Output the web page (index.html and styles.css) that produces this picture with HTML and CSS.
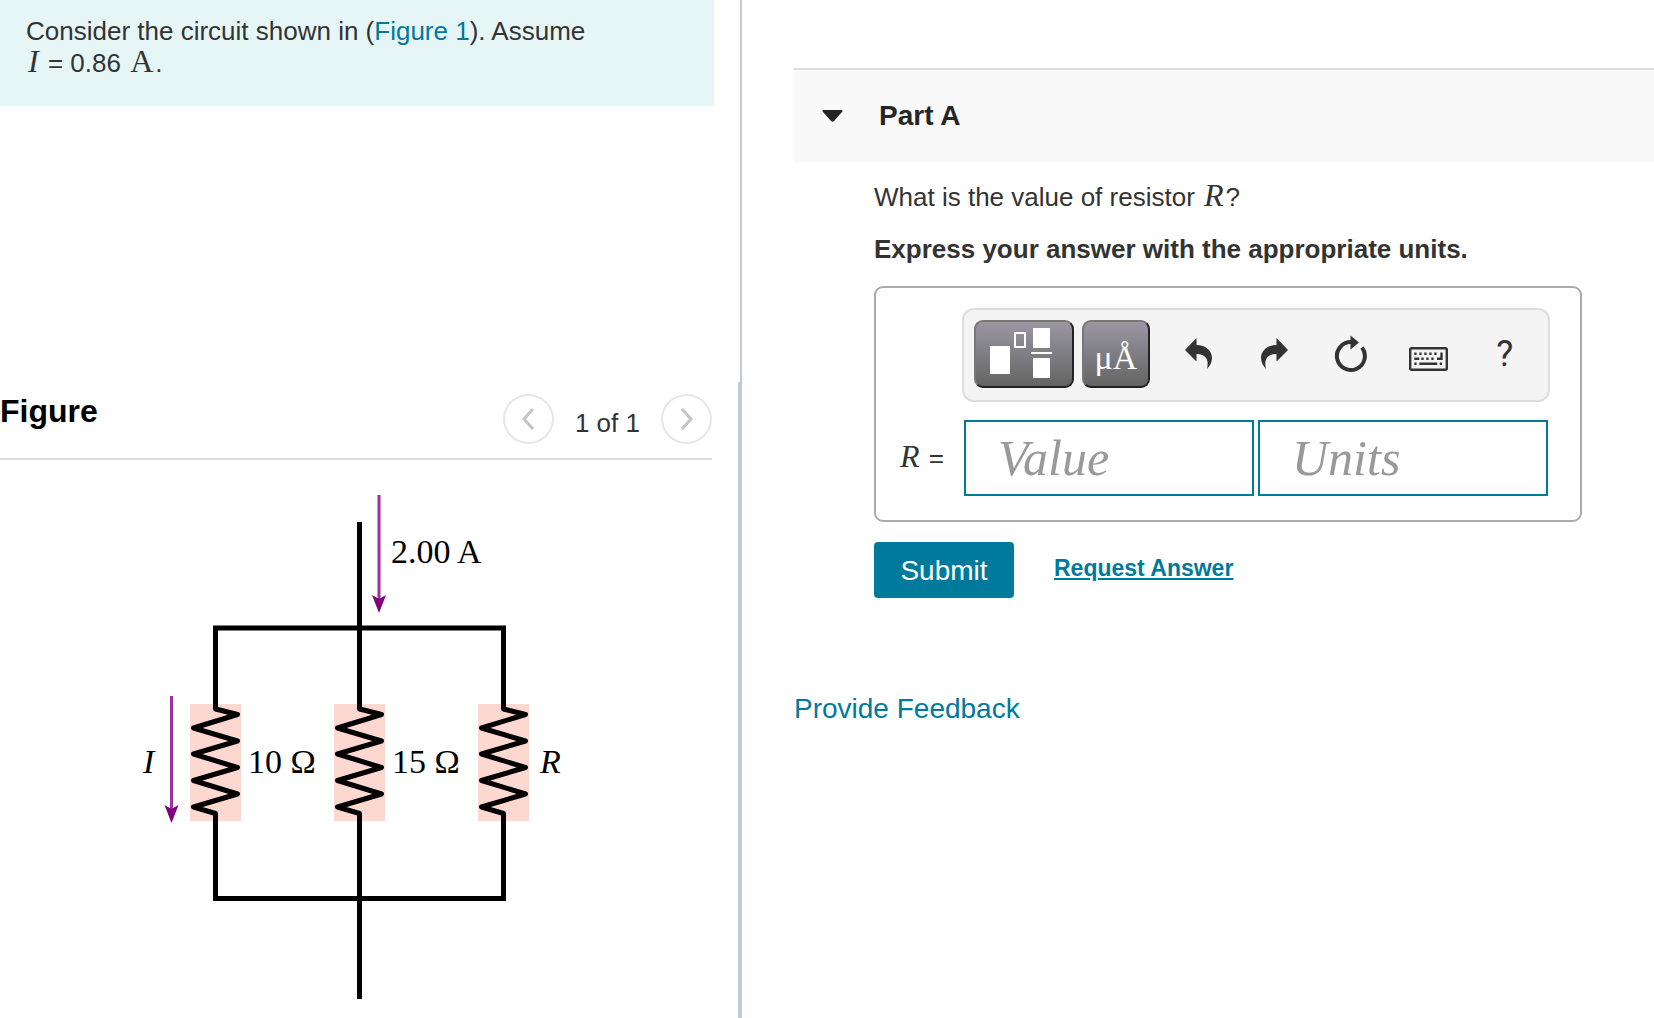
FILE: index.html
```html
<!DOCTYPE html>
<html lang="en">
<head>
    <meta charset="UTF-8">
    <meta name="viewport" content="width=device-width, initial-scale=1.0">
    <title>Part A</title>
    <link rel="stylesheet" href="styles.css">
</head>
<body>
    <div class="page">
        <div class="left">
            <section class="intro">
                <p class="problem">Consider the circuit shown in (<a href="#figure">Figure 1</a>). Assume<br>
                <i class="math">I</i> = 0.86 <span class="math">A</span>.</p>
            </section>

            <section class="figure" id="figure">
                <div class="figure-header">
                    <h2>Figure</h2>
                    <div class="pager">
                        <button class="round" aria-label="Previous figure">
                            <svg width="14" height="24" viewBox="0 0 14 24"><path d="M12 2L3 12L12 22"/></svg>
                        </button>
                        <span class="count">1 of 1</span>
                        <button class="round" aria-label="Next figure">
                            <svg width="14" height="24" viewBox="0 0 14 24"><path d="M2 2L11 12L2 22"/></svg>
                        </button>
                    </div>
                </div>

                <svg class="circuit" width="450" height="530" viewBox="0 0 450 530">
                    <defs>
                        <g id="resistor">
                            <rect x="-25.500" y="224" width="51" height="117" fill="#fcd8d1"/>
                            <path class="wire" d="M0 147V229L22 234.500L-22 248L22 261L-22 274L22 287.500L-22 300.500L22 314L-22 327L0 333.500V419"/>
                        </g>
                        <path id="head" fill="#800080" d="M-7 -18L0 -14L7 -18L0 0Z"/>
                    </defs>
                    <use href="#resistor" x="85.500"/>
                    <use href="#resistor" x="229.500"/>
                    <use href="#resistor" x="373.500"/>
                    <path class="wire" d="M229.500 42V150M83 148H376M83 418.500H376M229.500 416V519"/>
                    <path class="current" d="M249 15V120M41.500 216V329"/>
                    <use href="#head" x="249" y="133"/>
                    <use href="#head" x="41.500" y="343"/>
                    <text x="261" y="83">2.00 A</text>
                    <text x="13" y="293" font-style="italic">I</text>
                    <text x="118" y="293">10 Ω</text>
                    <text x="262" y="293">15 Ω</text>
                    <text x="410" y="293" font-style="italic">R</text>
                </svg>
            </section>
        </div>

        <div class="right">
            <div class="part-header">
                <svg width="21" height="12" viewBox="0 0 21 12"><path d="M1 0H20Q21 1 20 2L12 11Q10.500 12.500 9 11L1 2Q0 1 1 0Z" fill="#252525"/></svg>
                <h1>Part A</h1>
            </div>

            <div class="part-body">
                <p class="question">What is the value of resistor <i class="math">R</i>?</p>
                <p class="instructions">Express your answer with the appropriate units.</p>

                <div class="answer">
                    <div class="toolbar">
                        <button class="dark templates" aria-label="Templates">
                            <svg width="62" height="52" viewBox="0 0 62 52" fill="#fff">
                                <rect x="0" y="19" width="20" height="28"/>
                                <rect x="25" y="6" width="10" height="14" fill="none" stroke="#fff" stroke-width="2"/>
                                <rect x="43" y="1" width="17" height="20"/>
                                <rect x="41" y="25" width="21" height="2"/>
                                <rect x="43" y="31" width="17" height="20"/>
                            </svg>
                        </button>
                        <button class="dark symbols">μÅ</button>
                        <div class="tools">
                            <button class="tool" aria-label="Undo">
                                <svg width="27" height="32" viewBox="0 0 27 32"><path fill="#333" d="M0 12L11.500 0V7C21 7 27 13 27 20C27 24 25 28 22 31C24 23 22 16 11.500 16V23.500Z"/></svg>
                            </button>
                            <button class="tool" aria-label="Redo">
                                <svg width="27" height="32" viewBox="0 0 27 32"><path fill="#333" d="M27 12L15.500 0V7C6 7 0 13 0 20C0 24 2 28 5 31C3 23 5 16 15.500 16V23.500Z"/></svg>
                            </button>
                            <button class="tool" aria-label="Reset">
                                <svg width="36" height="38" viewBox="0 0 36 38">
                                    <path fill="none" stroke="#333" stroke-width="4" d="M29 12.500A14 14 0 1 1 18 7"/>
                                    <path fill="#333" d="M17.500 0.500L26 7.500L17.500 14.500Z"/>
                                </svg>
                            </button>
                            <button class="tool keyboard" aria-label="Keyboard shortcuts">
                                <svg width="39" height="24" viewBox="0 0 39 24">
                                    <rect x="1.200" y="1.200" width="36.600" height="21.600" rx="1.500" fill="none" stroke="#333" stroke-width="2.400"/>
                                    <path fill="none" stroke="#333" stroke-width="2.400" d="M5.300 6.700h2.300m2.700 0h2.300m2.700 0h2.300m2.700 0h2.300m2.700 0h2.300M5.300 11.700h5m2 0h2.300m2.700 0h2.300m2.700 0h2.300M32.500 5.500v6.200h-4.500M5.300 16.700h2.300m2.700 0h18m2.400 0h2.300"/>
                                </svg>
                            </button>
                            <button class="tool help" aria-label="Help">?</button>
                        </div>
                    </div>
                    <div class="fields">
                        <label for="value"><i class="math">R</i> =</label>
                        <input type="text" id="value" placeholder="Value">
                        <input type="text" id="units" placeholder="Units" aria-label="Units">
                    </div>
                </div>

                <div class="actions">
                    <button class="submit">Submit</button>
                    <a class="request" href="#">Request Answer</a>
                </div>
            </div>

            <a class="feedback" href="#">Provide Feedback</a>
        </div>
    </div>
</body>
</html>
```

FILE: styles.css
```css
* { box-sizing: border-box; }
body { margin: 0; background: #fff; color: #333; font-family: "Liberation Sans", Arial, sans-serif; font-size: 26px; line-height: 32px; }
h1, h2, p { margin: 0; }
a { color: #007a9c; text-decoration: none; }
button { padding: 0; font-family: inherit; cursor: pointer; }
svg { display: block; }
.math { padding: 0 2px; font-family: "Liberation Serif", "Times New Roman", serif; font-size: 32px; line-height: 0; }

.page { display: grid; grid-template-columns: minmax(0, 742fr) minmax(0, 912fr); min-height: 100vh; }

/* problem text and figure */
.left { display: flex; flex-direction: column; }
.intro { height: 382px; padding-right: 26px; border-right: 2px solid #bacddd; }
.problem { padding: 15px 26px 27px; background: #e6f6f6; }
.figure { flex: 1; padding: 12px 26px 0 0; border-right: 4px solid #bacddd; }
.figure-header { display: flex; justify-content: space-between; height: 66px; border-bottom: 2px solid #ddd; }
.figure-header h2 { padding-top: 1px; color: #000; font-size: 32px; }
.pager { display: flex; gap: 21px; }
.count { padding-top: 13px; }
.round { display: flex; align-items: center; justify-content: center; width: 51px; height: 50px; border: 2px solid #e6e6e6; border-radius: 50%; background: #fff; }
.round path { fill: none; stroke: #c4c4c4; stroke-width: 3; }
.circuit { margin: 20px 0 0 130px; }
.circuit text { font-family: "Liberation Serif", "Times New Roman", serif; font-size: 34px; fill: #000; }
.wire { fill: none; stroke: #000; stroke-width: 5; stroke-linejoin: round; }
.current { fill: none; stroke: #993399; stroke-width: 3; }

/* question and answer */
.right { padding: 68px 0 0 52px; }
.part-header { display: flex; align-items: center; gap: 36px; height: 94px; padding: 0 28px; border-top: 2px solid #ddd; background: #f9f9f9; }
.part-header h1 { color: #252525; font-size: 28px; }
.part-body { padding: 19px 72px 0 80px; }
.instructions { margin-top: 20px; font-weight: bold; }
.answer { margin-top: 21px; padding: 20px 30px 24px 22px; border: 2px solid #aaa; border-radius: 9px; }
.toolbar { display: flex; gap: 8px; height: 94px; margin-left: 64px; padding: 10px 5px 10px 10px; border: 2px solid #ddd; border-radius: 12px; background: #f4f4f4; }
.dark { display: flex; align-items: center; justify-content: center; height: 68px; border: 2px solid; border-color: #777 #222 #222 #777; border-radius: 9px; background: linear-gradient(#9a97a3, #646464); color: #fff; }
.templates { width: 100px; padding: 0 6px 2px 0; }
.symbols { width: 68px; padding-top: 8px; font-family: "Liberation Serif", "Times New Roman", serif; font-size: 34px; }
.tools { display: flex; flex: 1; padding-left: 2px; }
.tool { display: flex; flex: 1; align-items: center; justify-content: center; height: 68px; border: none; background: none; color: #333; }
.keyboard { padding-top: 9px; }
.help { font-family: Roboto, sans-serif; font-size: 36px; }
.fields { display: flex; align-items: center; gap: 4px; margin-top: 18px; padding-right: 2px; }
.fields label { width: 62px; white-space: nowrap; }
.fields input { flex: 1; min-width: 0; height: 76px; padding: 0 32px; border: 2px solid #007a9c; border-radius: 0; font-family: "Liberation Serif", "Times New Roman", serif; font-size: 50px; font-style: italic; }
.fields input::placeholder { color: #999; opacity: 1; }
.actions { display: flex; align-items: flex-start; gap: 40px; margin-top: 20px; }
.submit { width: 140px; height: 56px; padding-top: 2px; border: none; border-radius: 4px; background: #007a9c; color: #fff; font-size: 28px; }
.request { padding-top: 10px; font-size: 23px; font-weight: bold; text-decoration: underline; }
.feedback { display: inline-block; margin-top: 95px; font-size: 28px; }
```
